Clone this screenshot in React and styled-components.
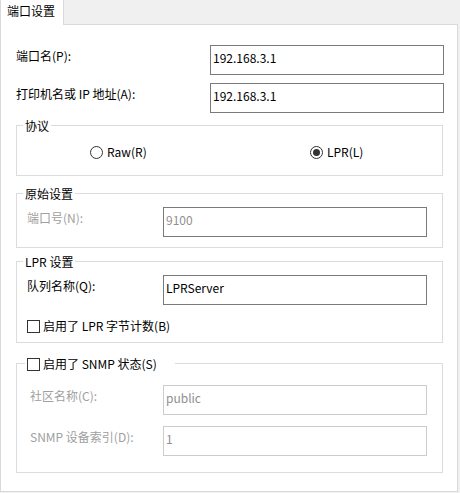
import React from "react";
import styled, { createGlobalStyle } from "styled-components";

const GlobalStyle = createGlobalStyle`
  html, body {
    margin: 0;
    padding: 0;
    background: #f0f0f0;
  }
  body {
    font-family: "Noto Sans CJK SC", "Microsoft YaHei", sans-serif;
    font-size: 12px;
    line-height: 16px;
    color: #000;
  }
  * { box-sizing: border-box; }
`;

const Window = styled.div`
  width: 460px;
  height: 493px;
  background: #f0f0f0;
  display: flex;
  flex-direction: column;
`;

const TabBar = styled.div`
  display: flex;
  height: 24px;
`;

const Tab = styled.div`
  position: relative;
  z-index: 1;
  width: 64px;
  height: 25px;
  padding: 3px 0 0 6px;
  background: #fff;
  border-left: 1px solid #d9d9d9;
  border-right: 1px solid #d9d9d9;
  white-space: nowrap;
`;

const Panel = styled.div`
  width: 458px;
  height: 468px;
  background: #fff;
  border: 1px solid #d9d9d9;
  padding: 20px 13px 0 15px;
  display: flex;
  flex-direction: column;
`;

const TopRow = styled.div`
  display: flex;
  align-items: flex-start;
  margin-top: ${(p) => p.$mt || 0}px;
`;

const Label = styled.div`
  flex: ${(p) => (p.$w ? `0 0 ${p.$w}px` : "1")};
  padding-top: 3px;
  padding-left: ${(p) => p.$indent || 0}px;
  color: ${(p) => (p.$disabled ? "#a0a0a0" : "#000")};
  white-space: nowrap;
`;

const TextBox = styled.input`
  width: ${(p) => p.$w}px;
  height: 30px;
  margin: 0;
  padding: 0 3px 5px 2px;
  border: 1px solid ${(p) => (p.$soft ? "#cccccc" : "#7a7a7a")};
  border-radius: 0;
  background: #fff;
  font-family: inherit;
  font-size: 12px;
  color: ${(p) => (p.$disabled ? "#8f8f8f" : "#000")};
  outline: none;
`;

const GroupBox = styled.div`
  width: 427px;
  margin-top: ${(p) => p.$mt}px;
  border: 1px solid #dcdcdc;
  padding: 0 15px ${(p) => p.$pb}px 10px;
  display: flex;
  flex-direction: column;
  align-items: flex-start;
`;

const Legend = styled.div`
  margin: -8px 0 0 -4px;
  padding: 0 2px;
  height: 16px;
  background: #fff;
  white-space: nowrap;
`;

const CheckLegend = styled(Legend)`
  width: 150px;
  margin-left: -2px;
  display: flex;
  align-items: center;
  gap: 3px;
`;

const FieldRow = styled.div`
  display: flex;
  align-items: flex-start;
  margin-top: ${(p) => p.$mt}px;
`;

const RadioRow = styled.div`
  display: grid;
  grid-template-columns: 220px auto;
  margin-top: 10px;
  padding-left: 63px;
`;

const Option = styled.label`
  display: flex;
  align-items: center;
  gap: 4px;
  height: 16px;
  white-space: nowrap;
`;

const RadioCircle = styled.span`
  width: 13px;
  height: 13px;
  border: 1px solid #333;
  border-radius: 50%;
  display: flex;
  align-items: center;
  justify-content: center;
  background: #fff;
  &::after {
    content: "";
    width: 7px;
    height: 7px;
    border-radius: 50%;
    background: ${(p) => (p.$on ? "#333" : "transparent")};
  }
`;

const CheckBox = styled.span`
  flex: 0 0 13px;
  width: 13px;
  height: 13px;
  border: 1px solid #333;
  background: #fff;
`;

const CheckRow = styled.label`
  display: flex;
  align-items: center;
  gap: 3px;
  height: 16px;
  margin-top: 13px;
  white-space: nowrap;
`;

export default function App() {
  return (
    <>
      <GlobalStyle />
      <Window>
        <TabBar>
          <Tab>端口设置</Tab>
        </TabBar>
        <Panel>
          <TopRow>
            <Label>端口名(P):</Label>
            <TextBox $w={234} readOnly defaultValue="192.168.3.1" />
          </TopRow>
          <TopRow $mt={8}>
            <Label>打印机名或 IP 地址(A):</Label>
            <TextBox $w={234} readOnly defaultValue="192.168.3.1" />
          </TopRow>

          <GroupBox $mt={12} $pb={15}>
            <Legend>协议</Legend>
            <RadioRow>
              <Option>
                <RadioCircle />
                Raw(R)
              </Option>
              <Option>
                <RadioCircle $on />
                LPR(L)
              </Option>
            </RadioRow>
          </GroupBox>

          <GroupBox $mt={17} $pb={10}>
            <Legend>原始设置</Legend>
            <FieldRow $mt={5}>
              <Label $w={136} $disabled>端口号(N):</Label>
              <TextBox $w={264} $disabled readOnly defaultValue="9100" />
            </FieldRow>
          </GroupBox>

          <GroupBox $mt={13} $pb={8}>
            <Legend>LPR 设置</Legend>
            <FieldRow $mt={5}>
              <Label $w={136}>队列名称(Q):</Label>
              <TextBox $w={264} readOnly defaultValue="LPRServer" />
            </FieldRow>
            <CheckRow>
              <CheckBox />
              启用了 LPR 字节计数(B)
            </CheckRow>
          </GroupBox>

          <GroupBox $mt={20} $pb={16}>
            <CheckLegend>
              <CheckBox />
              启用了 SNMP 状态(S)
            </CheckLegend>
            <FieldRow $mt={13}>
              <Label $w={136} $indent={3} $disabled>社区名称(C):</Label>
              <TextBox $w={264} $soft $disabled readOnly defaultValue="public" />
            </FieldRow>
            <FieldRow $mt={11}>
              <Label $w={136} $indent={3} $disabled>SNMP 设备索引(D):</Label>
              <TextBox $w={264} $soft $disabled readOnly defaultValue="1" />
            </FieldRow>
          </GroupBox>
        </Panel>
      </Window>
    </>
  );
}
